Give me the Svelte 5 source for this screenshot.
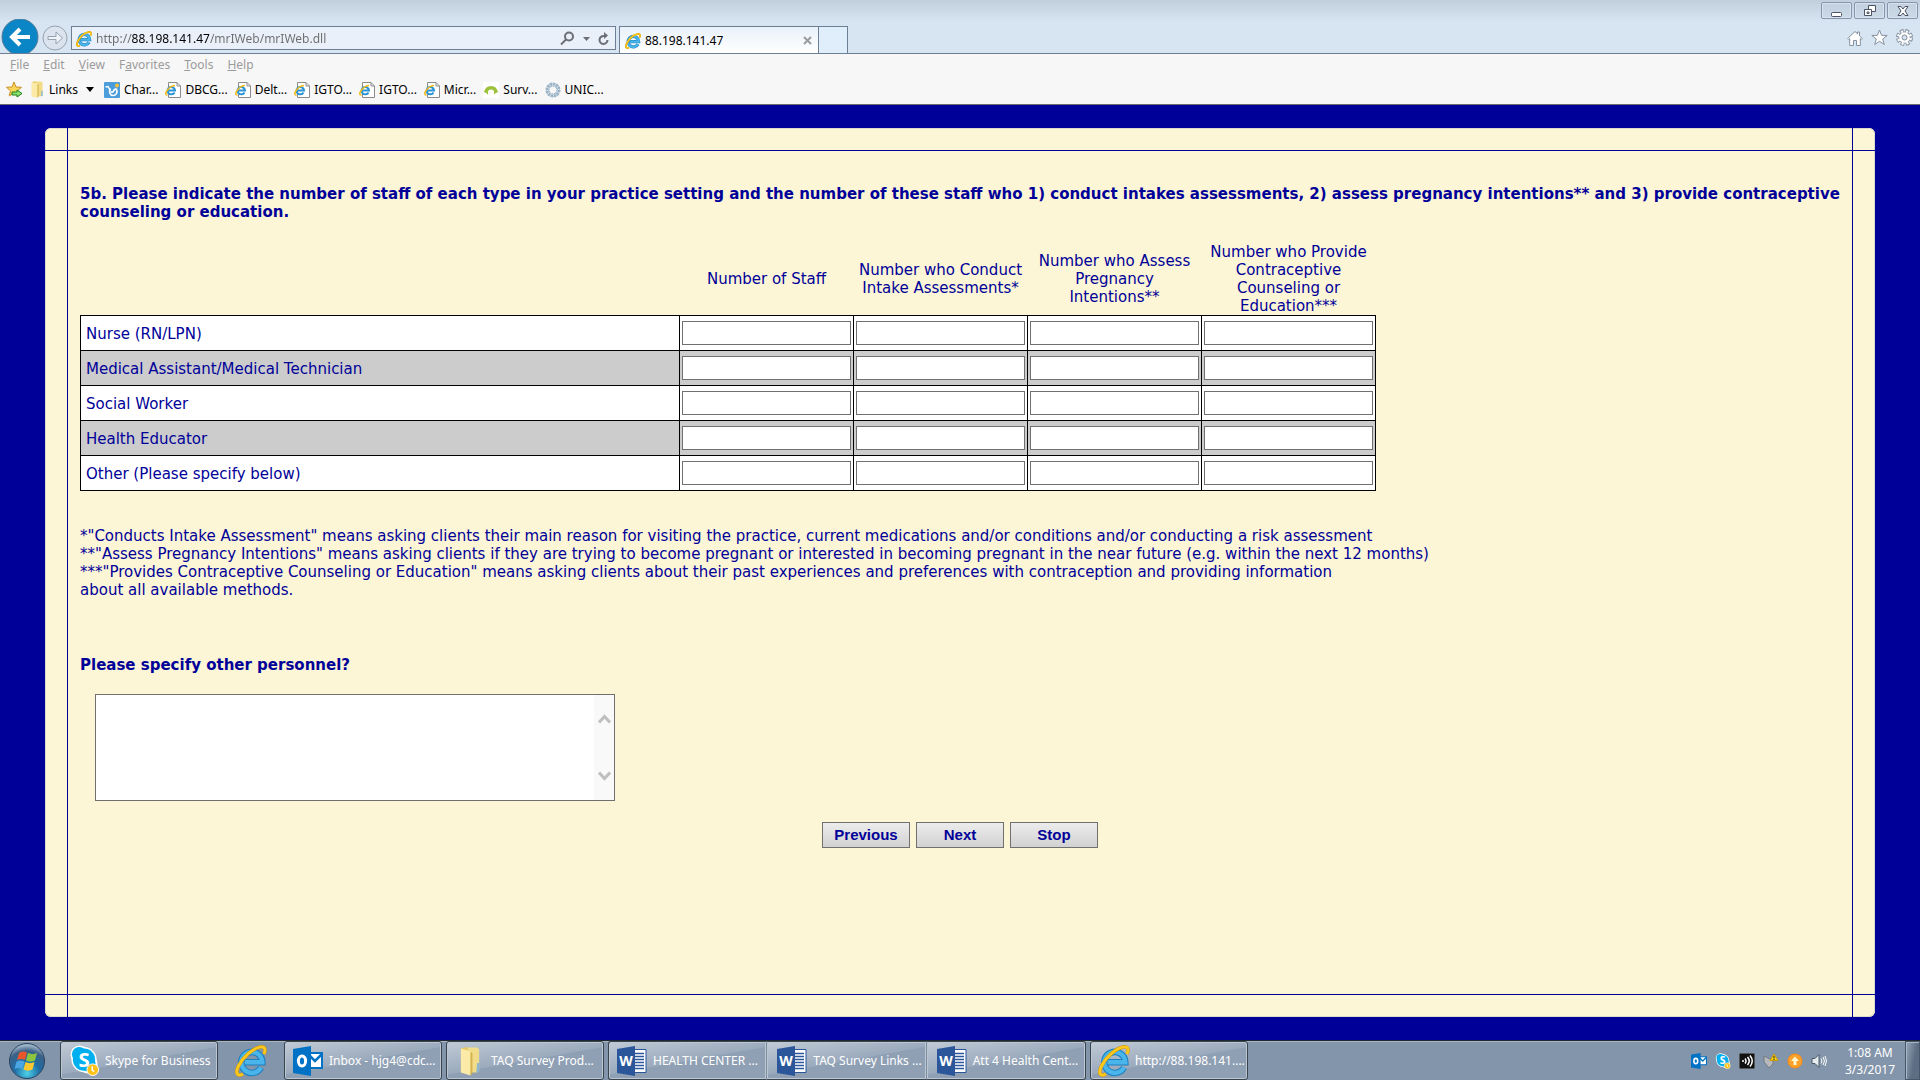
<script lang="ts">
  type Staff = { label: string; values: string[] };

  const columns = [
    'Number of Staff',
    'Number who Conduct Intake Assessments*',
    'Number who Assess Pregnancy Intentions**',
    'Number who Provide Contraceptive Counseling or Education***'
  ];

  let rows: Staff[] = $state([
    { label: 'Nurse (RN/LPN)', values: ['', '', '', ''] },
    { label: 'Medical Assistant/Medical Technician', values: ['', '', '', ''] },
    { label: 'Social Worker', values: ['', '', '', ''] },
    { label: 'Health Educator', values: ['', '', '', ''] },
    { label: 'Other (Please specify below)', values: ['', '', '', ''] }
  ]);

  const menus = [
    ['', 'F', 'ile'],
    ['', 'E', 'dit'],
    ['', 'V', 'iew'],
    ['F', 'a', 'vorites'],
    ['', 'T', 'ools'],
    ['', 'H', 'elp']
  ];

  const favorites = [
    { icon: 'chart', text: 'Char...' },
    { icon: 'page', text: 'DBCG...' },
    { icon: 'page', text: 'Delt...' },
    { icon: 'page', text: 'IGTO...' },
    { icon: 'page', text: 'IGTO...' },
    { icon: 'page', text: 'Micr...' },
    { icon: 'survey', text: 'Surv...' },
    { icon: 'unicef', text: 'UNIC...' }
  ];

  const wordDocs = ['HEALTH CENTER ...', 'TAQ Survey Links ...', 'Att 4 Health Cent...'];

  let url = $state('http://88.198.141.47/mrIWeb/mrIWeb.dll');
  let other = $state('');
</script>

{#snippet ie(size: number)}
  <svg width={size} height={size} viewBox="0 0 32 32" fill="none" aria-hidden="true">
    <path d="M26 22.500A10.500 10.500 0 1 1 27.300 17.300H10" stroke="#1b7fc0" stroke-width="6.500" />
    <path d="M26 22.500A10.500 10.500 0 1 1 27.300 17.300H10" stroke="#49b5ea" stroke-width="4.500" />
    <path d="M8 29C2 32 0 28 3.500 21 8 12 17 4 25 2c5-1 6 2 4 7" stroke="#c98e06" stroke-width="3.600" />
    <path d="M8 29C2 32 0 28 3.500 21 8 12 17 4 25 2c5-1 6 2 4 7" stroke="#fcc81e" stroke-width="2.800" />
  </svg>
{/snippet}

{#snippet folder(w: number, h: number)}
  <svg width={w} height={h} viewBox="0 0 24 30" aria-hidden="true">
    <path d="M2 2 9 0v28l-7-1z" fill="#e5c865" />
    <path d="M9 1h10l2 2v22l-2 2H9z" fill="#f2dc8a" />
    <path d="M2 2 12 5v25L2 27z" fill="#fbeaa8" />
    <path d="M12 5v25l2-2V7z" fill="#d4b34d" />
    <path d="M19 17h2v9l-3 1z" fill="#8ab7cf" />
  </svg>
{/snippet}

{#snippet outlook(w: number, h: number)}
  <svg width={w} height={h} viewBox="0 0 30 30" aria-hidden="true">
    <path d="M15 7h14v15H15z" fill="#fff" stroke="#0072c6" stroke-width="2" />
    <path d="m16 9 6 6 7-7" fill="none" stroke="#0072c6" stroke-width="2.500" />
    <path d="M0 3 18 0v30L0 27z" fill="#0072c6" />
    <ellipse cx="9" cy="15" rx="3.600" ry="5" fill="none" stroke="#fff" stroke-width="3" />
  </svg>
{/snippet}

{#snippet skype(size: number)}
  <svg width={size} height={size} viewBox="0 0 30 32" aria-hidden="true">
    <circle cx="10" cy="10" r="9.500" fill="#fff" />
    <circle cx="19" cy="20" r="9.500" fill="#fff" />
    <circle cx="14.500" cy="15" r="13" fill="#fff" />
    <circle cx="9.500" cy="9.500" r="7.500" fill="#00aff0" />
    <circle cx="19" cy="20" r="7.500" fill="#00aff0" />
    <circle cx="14.500" cy="15" r="11.500" fill="#00aff0" />
    <text class="letter" x="14.500" y="22.500" font-size="21">S</text>
    <circle cx="23.500" cy="25.500" r="6" fill="#fbc21a" stroke="#fff" />
    <path d="M23 22v4l2 1.500" fill="none" stroke="#fff" stroke-width="1.500" />
  </svg>
{/snippet}

{#snippet word()}
  <svg width="30" height="30" viewBox="0 0 30 30" aria-hidden="true">
    <path d="M15 3.500h14v23H15z" fill="#fff" stroke="#2b579a" />
    <path d="M18 7.500h9M18 10.500h9M18 13.500h9M18 16.500h9M18 19.500h9M18 22.500h9" stroke="#2b579a" stroke-width="1.500" />
    <path d="M0 3 18 0v30L0 27z" fill="#2b579a" />
    <text class="letter" x="9" y="20" font-size="14">W</text>
  </svg>
{/snippet}

{#snippet favIcon(kind: string)}
  {#if kind === 'page'}
    <svg width="16" height="16" viewBox="0 0 16 16" aria-hidden="true">
      <path d="M3.500.5h8.500l3.500 3.500v11.500h-12z" fill="#fff" stroke="#8b8b8b" />
      <path d="M12 .5v3.500h3.500" fill="none" stroke="#8b8b8b" />
      <path d="M9.500 10.500A3.700 3.700 0 1 1 10 8.500H3.500" fill="none" stroke="#2a93d5" stroke-width="2" />
      <path d="M2.500 13C0 13.500.5 10.500 2.500 8 5 5 8 3.500 10 3.500" fill="none" stroke="#f5bb18" stroke-width="1.500" />
    </svg>
  {:else if kind === 'chart'}
    <svg width="16" height="16" viewBox="0 0 16 16" aria-hidden="true">
      <rect width="16" height="16" rx="1" fill="#4b9edb" />
      <path d="M1.500 5 4 4.500l2 3.500" fill="none" stroke="#fff" stroke-width="1.500" />
      <path d="M6.500 6.500c-2 3.500-.5 7 2.500 7s5-3 3.500-6.500M7 9.500c1 1.500 2.500.5 3-1.500l2.500-1.500" fill="none" stroke="#fff" stroke-width="1.600" />
      <circle cx="13" cy="3.500" r="2" fill="#f8c13a" />
    </svg>
  {:else if kind === 'survey'}
    <svg width="16" height="16" viewBox="0 0 16 16" aria-hidden="true">
      <rect width="16" height="16" fill="#fff" />
      <path d="M2.800 10.500C4 4 12 4 13.200 10.500" fill="none" stroke="#9cc13b" stroke-width="3.500" />
      <path d="M.5 9h4.500v3.500zM11 9h4.500l-4.500 3.500z" fill="#9cc13b" />
    </svg>
  {:else}
    <svg width="16" height="16" viewBox="0 0 16 16" aria-hidden="true">
      <circle cx="8" cy="8" r="5.500" fill="none" stroke="#8fabc0" stroke-width="4" stroke-dasharray="2 .8" />
      <circle cx="8" cy="8" r="6.500" fill="none" stroke="#a9bfcf" />
      <circle cx="8" cy="8" r="4.500" fill="none" stroke="#b9cbd9" />
    </svg>
  {/if}
{/snippet}

<div class="screen">
  <header class="titlebar">
    <button class="back" aria-label="Back">
      <svg width="38" height="34" viewBox="0 0 38 34">
        <circle cx="19" cy="18" r="18" fill="#0a85c6" stroke="#527b9b" />
        <path d="M29 18H12M19 10l-8 8 8 8" fill="none" stroke="#fff" stroke-width="4" />
      </svg>
    </button>
    <button class="forward" aria-label="Forward">
      <svg width="26" height="26" viewBox="0 0 26 26">
        <circle cx="13" cy="13" r="12" fill="#dbe4ee" stroke="#95a2b0" />
        <path d="M6 11.500h8V7l6.500 6-6.500 6v-4.500H6z" fill="#eef3f8" stroke="#95a2b0" />
      </svg>
    </button>
    <div class="address">
      {@render ie(16)}
      <input type="text" aria-label="Address" bind:value={url} />
      <button aria-label="Search">
        <svg width="15" height="15" viewBox="0 0 15 15" fill="none" stroke="#6b6f76" stroke-width="2">
          <circle cx="9" cy="5.500" r="4" /><path d="m6 8.500-5 5" />
        </svg>
      </button>
      <button aria-label="Show address list">
        <svg width="7" height="4" viewBox="0 0 7 4"><path d="M0 0h7L3.500 4z" fill="#6b6f76" /></svg>
      </button>
      <button aria-label="Refresh">
        <svg width="11" height="14" viewBox="0 0 11 14" fill="none" stroke="#6b6f76" stroke-width="2">
          <path d="M9.500 8A4 4 0 1 1 6 4h1" /><path d="M6 0v7l4-3.500z" fill="#6b6f76" stroke="none" />
        </svg>
      </button>
    </div>
    <div class="tab">
      {@render ie(16)}
      <span>88.198.141.47</span>
      <button aria-label="Close tab">
        <svg width="9" height="9" viewBox="0 0 9 9"><path d="m1 1 7 7M8 1 1 8" stroke="#9c9c9c" stroke-width="2" /></svg>
      </button>
    </div>
    <button class="new-tab" aria-label="New tab"></button>
    <div class="window-side">
      <div class="captions">
        <button aria-label="Minimize">
          <svg width="12" height="12" viewBox="0 0 12 12"><rect x=".5" y="7.500" width="10" height="4" rx="1" fill="#fff" stroke="#4b5364" /></svg>
        </button>
        <button aria-label="Restore">
          <svg width="12" height="12" viewBox="0 0 12 12" fill="#fff" stroke="#4b5364">
            <path d="M4.500.5h7v6h-7z" /><path d="M.5 4.500h7v6h-7z" /><path d="M3 7h2v1.500H3z" />
          </svg>
        </button>
        <button aria-label="Close">
          <svg width="12" height="12" viewBox="0 0 12 12"><path d="M1 1.500h3l2 2.500 2-2.500h3L8 6l3 4.500H8L6 8l-2 2.500H1L4 6z" fill="#fff" stroke="#4b5364" /></svg>
        </button>
      </div>
      <div class="tools">
        <button aria-label="Home">
          <svg width="16" height="16" viewBox="0 0 16 16"><path d="m.7 8.500 7.300-7 2.500 2.400V2h2v3.800l2.800 2.700-1 1-1-.8v6.800h-3.800v-5h-3v5H2.700V8.700l-1 .8z" fill="#fff" stroke="#8590a0" /></svg>
        </button>
        <button aria-label="Favorites">
          <svg width="17" height="17" viewBox="0 0 17 17"><path d="m8.500 1 2 5.300 5.700.2-4.500 3.500 1.600 5.500-4.800-3.200-4.800 3.200L5.300 10 .8 6.500l5.700-.2z" fill="#fff" stroke="#8590a0" /></svg>
        </button>
        <button aria-label="Settings">
          <svg width="17" height="17" viewBox="0 0 17 17">
            <circle cx="8.500" cy="8.500" r="6" fill="#8590a0" />
            <circle cx="8.500" cy="8.500" r="6.500" fill="none" stroke="#8590a0" stroke-width="4" stroke-dasharray="3.500 1.600" />
            <circle cx="8.500" cy="8.500" r="6.300" fill="none" stroke="#fff" stroke-width="2.500" stroke-dasharray="2 2.950" stroke-dashoffset="-.7" />
            <circle cx="8.500" cy="8.500" r="3.800" fill="none" stroke="#fff" stroke-width="3" />
            <circle cx="8.500" cy="8.500" r="2.500" fill="#d7e4f1" stroke="#8590a0" />
          </svg>
        </button>
      </div>
    </div>
  </header>

  <div class="bars">
    <nav class="menu">
      {#each menus as [before, key, after]}
        <button>{before}<u>{key}</u>{after}</button>
      {/each}
    </nav>
    <div class="favorites">
      <button aria-label="Add to Favorites bar">
        <svg width="17" height="17" viewBox="0 0 17 17">
          <path d="m8 1 2 5 5.500.3-4 3.500 1.300 5.200L8 12l-4.800 3 1.300-5.200-4-3.500L6 6z" fill="#fbd65b" stroke="#c8902a" />
          <path d="M6 11h5V9l5 3.500-5 3.500v-2H6z" fill="#8be070" stroke="#21831b" />
        </svg>
      </button>
      <button class="links">
        {@render folder(15, 17)}
        <span>Links</span>
        <svg width="8" height="5" viewBox="0 0 8 5"><path d="M0 0h8L4 5z" fill="#000" /></svg>
      </button>
      {#each favorites as fav}
        <button>
          {@render favIcon(fav.icon)}
          <span>{fav.text}</span>
        </button>
      {/each}
    </div>
  </div>

  <main>
    <form class="panel" onsubmit={(e) => e.preventDefault()}>
      <h1>
        5b. Please indicate the number of staff of each type in your practice setting and the number of these staff who 1)
        conduct intakes assessments, 2) assess pregnancy intentions** and 3) provide contraceptive counseling or education.
      </h1>

      <table>
        <colgroup>
          <col />
          {#each columns as _}
            <col class="count" />
          {/each}
        </colgroup>
        <thead>
          <tr>
            <td></td>
            {#each columns as column}
              <th scope="col">{column}</th>
            {/each}
          </tr>
        </thead>
        <tbody>
          {#each rows as row}
            <tr>
              <th scope="row">{row.label}</th>
              {#each columns as column, i}
                <td><input type="text" aria-label="{row.label}: {column}" bind:value={row.values[i]} /></td>
              {/each}
            </tr>
          {/each}
        </tbody>
      </table>

      <p class="notes">
        *"Conducts Intake Assessment" means asking clients their main reason for visiting the practice, current medications and/or conditions and/or conducting a risk assessment<br />
        **"Assess Pregnancy Intentions" means asking clients if they are trying to become pregnant or interested in becoming pregnant in the near future (e.g. within the next 12 months)<br />
        ***"Provides Contraceptive Counseling or Education" means asking clients about their past experiences and preferences with contraception and providing information<br />
        about all available methods.
      </p>

      <label for="other">Please specify other personnel?</label>
      <div class="memo">
        <textarea id="other" bind:value={other}></textarea>
        <div class="scroll">
          <button type="button" aria-label="Scroll up">
            <svg width="13" height="10" viewBox="0 0 13 10"><path d="m1 8.500 5.500-6 5.500 6" fill="none" stroke="#bfbfbf" stroke-width="3" /></svg>
          </button>
          <button type="button" aria-label="Scroll down">
            <svg width="13" height="10" viewBox="0 0 13 10"><path d="m1 1.500 5.500 6 5.500-6" fill="none" stroke="#bfbfbf" stroke-width="3" /></svg>
          </button>
        </div>
      </div>

      <div class="actions">
        <button type="button">Previous</button>
        <button type="submit">Next</button>
        <button type="button">Stop</button>
      </div>
    </form>
  </main>

  <footer class="taskbar">
    <button class="start" aria-label="Start">
      <svg width="38" height="38" viewBox="0 0 38 38">
        <defs>
          <radialGradient id="orb" cx="50%" cy="85%" r="80%">
            <stop offset="0" stop-color="#4fd0e8" />
            <stop offset=".45" stop-color="#1d6da5" />
            <stop offset=".8" stop-color="#3c6186" />
            <stop offset="1" stop-color="#9db4c9" />
          </radialGradient>
        </defs>
        <circle cx="19" cy="19" r="17.500" fill="url(#orb)" stroke="#29435e" />
        <path d="M11 11c3-2 5-2 8-.5l-2 7.500c-3-1.500-5-1.500-8 0z" fill="#e8562a" />
        <path d="M20 11c3 1.500 6 1.500 9 0l-2 7.500c-3 1.500-6 1.500-9 0z" fill="#8cc63e" />
        <path d="M8.500 19.500c3-1.500 5-1.500 8 0l-2 7.500c-3-1.500-5-1.500-8 0z" fill="#4aa5e0" />
        <path d="M17.500 20c3 1.500 6 1.500 9 0l-2 7.500c-3 1.500-6 1.500-9 0z" fill="#fcc82e" />
      </svg>
    </button>
    <button class="task">
      <span class="icon">{@render skype(31)}</span>
      <span>Skype for Business</span>
    </button>
    <button class="pinned" aria-label="Internet Explorer">{@render ie(32)}</button>
    <button class="task">
      <span class="icon">{@render outlook(30, 30)}</span>
      <span>Inbox - hjg4@cdc...</span>
    </button>
    <button class="task">
      <span class="icon">{@render folder(23, 30)}</span>
      <span>TAQ Survey Prod...</span>
    </button>
    <div class="group">
      {#each wordDocs as doc}
        <button class="task">
          <span class="icon">{@render word()}</span>
          <span>{doc}</span>
        </button>
      {/each}
    </div>
    <button class="task">
      <span class="icon">{@render ie(32)}</span>
      <span>http://88.198.141....</span>
    </button>

    <div class="tray">
      {@render outlook(16, 16)}
      {@render skype(16)}
      <svg width="16" height="16" viewBox="0 0 16 16" fill="none" stroke="#fff" stroke-width="1.500">
        <rect x=".5" y=".5" width="15" height="15" rx="1" fill="#111" stroke="#555" stroke-width="1" />
        <circle cx="4" cy="8" r="1" fill="#fff" stroke="none" />
        <path d="M6 5.500q2 2.500 0 5M8.500 4q3.500 4 0 8M11 2.500q4.500 5.500 0 11" />
      </svg>
      <svg width="16" height="16" viewBox="0 0 16 16">
        <path d="m1 3 6 3 3 1v4l-4 4-5-6z" fill="#b5b9bd" stroke="#74797e" />
        <path d="m11 1 4 6.500H7z" fill="#fcd116" stroke="#c79a00" /><path d="M11 3v2.500M11 6v1" stroke="#222" />
      </svg>
      <svg width="16" height="16" viewBox="0 0 16 16">
        <circle cx="8" cy="8" r="7" fill="#f9a12b" stroke="#fb8c12" />
        <path d="m8 3.500 4 4.500H9.500v4h-3V8H4z" fill="#fff6cf" />
      </svg>
      <svg width="16" height="16" viewBox="0 0 16 16" fill="none" stroke="#fff">
        <path d="M1 5.500h3l4-4v13l-4-4H1z" fill="#e6ebf0" stroke="#4b5866" />
        <path d="M10 5.500q2 2.500 0 5M12 4q3 4 0 8M14 3q3 5 0 10" />
      </svg>
    </div>
    <div class="clock">
      <span>1:08 AM</span>
      <span>3/3/2017</span>
    </div>
    <button class="desktop" aria-label="Show desktop"></button>
  </footer>
</div>

<style>
  :global(body) {
    margin: 0;
  }

  .screen {
    --navy: #000099;
    min-height: 100vh;
    display: flex;
    flex-direction: column;
    font-family: "Noto Sans", "Open Sans", sans-serif;
    font-size: 12px;
    line-height: 16px;
    background: var(--navy);
  }

  .screen * {
    box-sizing: border-box;
  }

  button {
    padding: 0;
    border: none;
    background: none;
    font: inherit;
    color: inherit;
  }

  svg {
    display: block;
    flex: none;
  }

  .letter {
    fill: #fff;
    font-family: "Open Sans", sans-serif;
    font-weight: bold;
    text-anchor: middle;
  }

  /* browser chrome */
  .titlebar {
    display: flex;
    align-items: flex-end;
    height: 54px;
    border-bottom: 1px solid #6d7f95;
    background: linear-gradient(#c1cfdd, #d7e4f1 22px);
  }

  .back {
    margin: 0 3px 0 1px;
  }

  .forward {
    margin-bottom: 2px;
  }

  .address {
    display: flex;
    flex: 0 1 545px;
    align-items: center;
    gap: 8px;
    height: 24px;
    margin: 0 3px;
    margin-bottom: 3px;
    padding: 1px 6px 0 4px;
    border: 1px solid #6d7f95;
    background: #e9f0fa;
  }

  .address input {
    flex: 1;
    min-width: 0;
    margin-left: -4px;
    padding: 0;
    border: none;
    outline: none;
    font: inherit;
    color: #6d6d6d;
    /* the host part of the address is drawn in black */
    background: linear-gradient(90deg, #6d6d6d 36px, #000 36px 114px, #6d6d6d 114px);
    background-clip: text;
    -webkit-text-fill-color: transparent;
  }

  .tab {
    display: flex;
    flex: 0 1 200px;
    align-items: center;
    gap: 4px;
    height: 27px;
    padding: 1px 6px 0 5px;
    border: 1px solid #6d7f95;
    border-bottom: none;
    background: linear-gradient(#e9f1fa, #fff);
    color: #000;
  }

  .tab button {
    margin-left: auto;
  }

  .new-tab {
    width: 29px;
    height: 27px;
    border: 1px solid #6d7f95;
    border-width: 1px 1px 0 0;
    background: #e0edfa;
  }

  .window-side {
    display: flex;
    flex-direction: column;
    align-items: flex-end;
    gap: 10px;
    margin-left: auto;
    padding: 0 2px 7px 0;
  }

  .captions {
    display: flex;
    gap: 2px;
  }

  .captions button {
    display: flex;
    align-items: center;
    justify-content: center;
    width: 31px;
    height: 17px;
    border: 1px solid #8695ad;
    border-radius: 2px;
    background: linear-gradient(#c3d0df, #cbd8e6);
    box-shadow: inset 0 0 0 1px #d8e3ee;
  }

  .tools {
    display: flex;
    gap: 8px;
    padding-right: 5px;
  }

  .bars {
    padding: 3px 0 0 6px;
    border-bottom: 1px solid #6d6d6d;
    background: #f7f7f7;
  }

  .menu {
    display: flex;
    gap: 14px;
    height: 16px;
    padding-left: 4px;
    color: #9b9b9b;
  }

  .favorites {
    display: flex;
    align-items: center;
    gap: 7px;
    height: 31px;
    padding-top: 2px;
    color: #000;
  }

  .favorites button {
    display: flex;
    align-items: center;
    gap: 4px;
  }

  .favorites .links span {
    padding-right: 4px;
  }

  .favorites .links {
    padding-right: 3px;
  }

  /* survey page */
  main {
    display: flex;
    flex: 1;
    padding: 23px 45px;
  }

  .panel {
    position: relative;
    flex: 1;
    padding: 57px 35px;
    border-radius: 6px;
    background: #fcf5d6;
    box-shadow: inset 0 0 0 1px #dedacb;
    color: var(--navy);
    font-family: Verdana, "DejaVu Sans", sans-serif;
    font-size: 15px;
    line-height: 18px;
  }

  .panel::before,
  .panel::after {
    content: "";
    position: absolute;
    pointer-events: none;
    border: 0 solid var(--navy);
  }

  .panel::before {
    inset: 0 22px;
    border-width: 0 1px;
  }

  .panel::after {
    inset: 22px 0;
    border-width: 1px 0;
  }

  h1 {
    margin: 0 0 22px;
    font-size: 15px;
  }

  table {
    width: 100%;
    max-width: 1296px;
    table-layout: fixed;
    border-collapse: collapse;
  }

  .count {
    width: 174px;
  }

  th {
    font-weight: normal;
  }

  thead th {
    height: 72px;
    padding: 0 4px;
  }

  tbody th,
  tbody td {
    height: 35px;
    padding: 0 2px;
    border: 1px solid #000;
  }

  tbody th {
    padding: 1px 5px 0;
    text-align: left;
  }

  tbody tr {
    background: #fff;
  }

  tbody tr:nth-child(even) {
    background: #ccc;
  }

  td input {
    display: block;
    width: 100%;
    height: 24px;
    padding: 0 4px;
    border: 1px solid #707070;
    background: #fff;
    font: inherit;
    color: inherit;
  }

  .notes {
    margin: 36px 0 57px;
  }

  label {
    display: block;
    font-weight: bold;
  }

  .memo {
    display: flex;
    max-width: 520px;
    height: 107px;
    margin: 20px 0 21px 15px;
    border: 1px solid #707070;
    background: #fff;
  }

  textarea {
    flex: 1;
    min-width: 0;
    padding: 4px;
    border: none;
    outline: none;
    resize: none;
    overflow: hidden;
    font: inherit;
    color: inherit;
  }

  .scroll {
    display: flex;
    flex-direction: column;
    align-items: center;
    justify-content: space-between;
    width: 20px;
    padding: 19px 0;
    background: #f9f9f9;
  }

  .actions {
    display: flex;
    justify-content: center;
    gap: 6px;
  }

  .actions button {
    width: 88px;
    height: 26px;
    border: 1px solid #707070;
    background: linear-gradient(#ececec, #d2d2d2);
    font-family: Arial, "Liberation Sans", sans-serif;
    font-size: 15px;
    font-weight: bold;
  }

  /* taskbar */
  .taskbar {
    display: flex;
    align-items: center;
    gap: 4px;
    height: 40px;
    padding-left: 8px;
    border-top: 1px solid #1e2630;
    background: #8395ab;
    box-shadow: inset 0 1px #a9b6c6;
    color: #fff;
  }

  .start {
    margin-right: 10px;
  }

  .task {
    display: flex;
    flex: 0 1 158px;
    align-items: center;
    gap: 4px;
    min-width: 0;
    height: 39px;
    padding: 0 4px 0 6px;
    border: 1px solid #39444f;
    border-radius: 3px;
    background:
      linear-gradient(170deg, rgba(255, 255, 255, 0.45), rgba(255, 255, 255, 0.1) 50%, transparent 51%),
      #8fa0b5;
    box-shadow: inset 0 0 0 1px #bcc7d4;
    white-space: nowrap;
  }

  .icon {
    display: flex;
    flex: none;
    justify-content: center;
    width: 34px;
  }

  .pinned {
    width: 58px;
    display: flex;
    justify-content: center;
  }

  .group {
    display: flex;
    flex: 0 1 478px;
    min-width: 0;
  }

  .group .task {
    flex: 1 1 158px;
  }

  .group .task:not(:first-child) {
    padding-left: 8px;
    border-left: none;
    border-top-left-radius: 0;
    border-bottom-left-radius: 0;
  }

  .group .task:not(:last-child) {
    border-right-color: #7c8b9d;
    border-top-right-radius: 0;
    border-bottom-right-radius: 0;
  }

  .tray {
    display: flex;
    gap: 8px;
    margin-left: auto;
  }

  .clock {
    display: flex;
    flex-direction: column;
    align-items: center;
    width: 70px;
    padding-left: 8px;
    line-height: 17px;
  }

  .desktop {
    align-self: stretch;
    width: 15px;
    border: 1px solid #49566a;
    background: linear-gradient(100deg, #98a6b8, #5d6e84 60%);
    box-shadow: inset 1px 1px #a9b6c6;
  }
</style>
